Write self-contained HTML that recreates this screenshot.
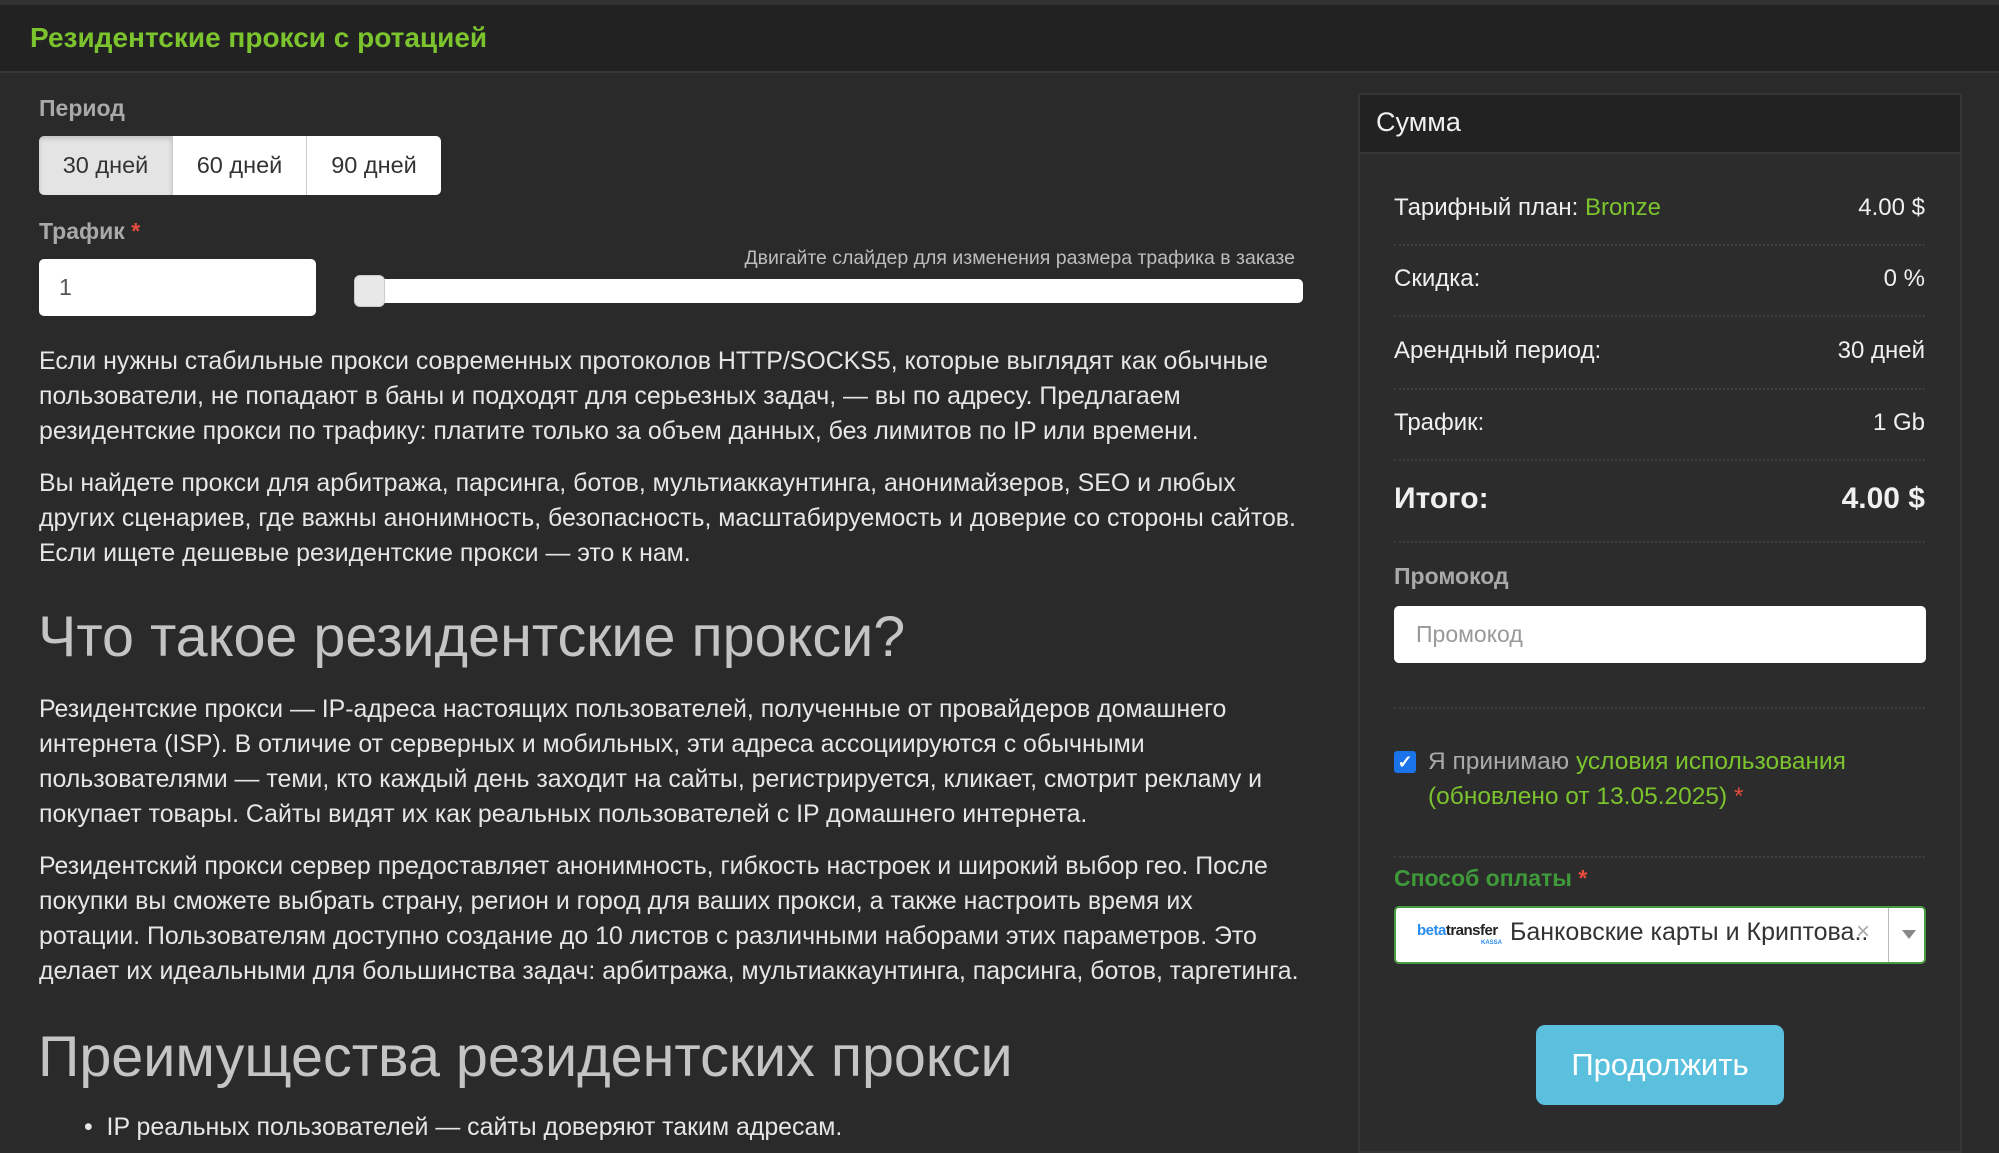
<!DOCTYPE html>
<html><head><meta charset="utf-8"><style>
*{box-sizing:border-box;margin:0;padding:0}
body{width:1999px;height:1144px;overflow:hidden;background:#2a2a2a;font-family:"Liberation Sans",sans-serif;color:#e2e2e2;position:relative}
.abs{position:absolute;white-space:nowrap}
.top{position:absolute;left:0;top:0;width:1999px;height:73px;background:#222;border-top:5px solid #333;border-bottom:2px solid #363636}
.title{left:30px;top:22px;font-size:28px;font-weight:bold;color:#7cc42e}
.lbl{font-size:23px;font-weight:bold;color:#a9a9a9}
.btns{left:39px;top:136px;height:59px;display:flex;border-radius:5px;overflow:hidden}
.btns div{width:134px;height:59px;background:#fff;color:#333;font-size:23.5px;line-height:59px;text-align:center;border-right:1px solid #ccc}
.btns div:first-child{background:#e4e4e4;box-shadow:inset 0 3px 5px rgba(0,0,0,.15)}
.btns div:last-child{border-right:none}
.inp{left:39px;top:259px;width:277px;height:57px;background:#fff;border-radius:5px;color:#555;font-size:23px;line-height:57px;padding-left:20px}
.track{left:354px;top:279px;width:949px;height:24px;background:#fff;border-radius:5px}
.thumb{left:354px;top:275px;width:31px;height:32px;background:#e8e8e8;border:1px solid #ccc;border-radius:6px}
.txt{left:39px;font-size:24.9px;line-height:35px;color:#e6e6e6}
.h2{left:38px;font-size:57.5px;color:#c4c4c4}
.panel{position:absolute;left:1358px;top:93px;width:604px;height:1060px;background:#2c2c2c;border:2px solid #353535}
.phead{position:absolute;left:1358px;top:93px;width:604px;height:61px;background:#222;border:2px solid #353535}
.row{position:absolute;left:1394px;width:531px;font-size:24px;color:#f0f0f0}
.row span.r{position:absolute;right:0}
.sep{position:absolute;left:1394px;width:531px;border-top:2px dotted #3e3e3e}
</style></head><body>
<div class="top"></div>
<div class="abs title">Резидентские прокси с ротацией</div>
<div class="abs lbl" style="left:39px;top:95px">Период</div>
<div class="abs btns"><div>30 дней</div><div>60 дней</div><div>90 дней</div></div>
<div class="abs lbl" style="left:39px;top:218px">Трафик <span style="color:#e74c3c">*</span></div>
<div class="abs inp">1</div>
<div class="abs" style="right:704px;top:247px;font-size:19.5px;color:#bdbdbd">Двигайте слайдер для изменения размера трафика в заказе</div>
<div class="abs track"></div>
<div class="abs thumb"></div>
<div class="abs txt" style="top:344px">Если нужны стабильные прокси современных протоколов HTTP/SOCKS5, которые выглядят как обычные<br>пользователи, не попадают в баны и подходят для серьезных задач, — вы по адресу. Предлагаем<br>резидентские прокси по трафику: платите только за объем данных, без лимитов по IP или времени.</div>
<div class="abs txt" style="top:466px">Вы найдете прокси для арбитража, парсинга, ботов, мультиаккаунтинга, анонимайзеров, SEO и любых<br>других сценариев, где важны анонимность, безопасность, масштабируемость и доверие со стороны сайтов.<br>Если ищете дешевые резидентские прокси — это к нам.</div>
<div class="abs h2" style="top:604px">Что такое резидентские прокси?</div>
<div class="abs txt" style="top:692px">Резидентские прокси — IP-адреса настоящих пользователей, полученные от провайдеров домашнего<br>интернета (ISP). В отличие от серверных и мобильных, эти адреса ассоциируются с обычными<br>пользователями — теми, кто каждый день заходит на сайты, регистрируется, кликает, смотрит рекламу и<br>покупает товары. Сайты видят их как реальных пользователей с IP домашнего интернета.</div>
<div class="abs txt" style="top:849px">Резидентский прокси сервер предоставляет анонимность, гибкость настроек и широкий выбор гео. После<br>покупки вы сможете выбрать страну, регион и город для ваших прокси, а также настроить время их<br>ротации. Пользователям доступно создание до 10 листов с различными наборами этих параметров. Это<br>делает их идеальными для большинства задач: арбитража, мультиаккаунтинга, парсинга, ботов, таргетинга.</div>
<div class="abs h2" style="top:1024px">Преимущества резидентских прокси</div>
<div class="abs txt" style="top:1110px;left:84px">•&nbsp; IP реальных пользователей — сайты доверяют таким адресам.</div>

<div class="panel"></div>
<div class="phead"></div>
<div class="abs" style="left:1376px;top:107px;font-size:27px;color:#f0f0f0">Сумма</div>
<div class="row" style="top:194px">Тарифный план: <span style="color:#7cc42e">Bronze</span><span class="r">4.00 $</span></div>
<div class="sep" style="top:244px"></div>
<div class="row" style="top:265px">Скидка:<span class="r">0 %</span></div>
<div class="sep" style="top:315px"></div>
<div class="row" style="top:337px">Арендный период:<span class="r">30 дней</span></div>
<div class="sep" style="top:388px"></div>
<div class="row" style="top:409px">Трафик:<span class="r">1 Gb</span></div>
<div class="sep" style="top:459px"></div>
<div class="row" style="top:482px;font-size:30px;font-weight:bold">Итого:<span class="r">4.00 $</span></div>
<div class="sep" style="top:541px"></div>
<div class="abs lbl" style="left:1394px;top:563px">Промокод</div>
<div class="abs" style="left:1394px;top:606px;width:532px;height:57px;background:#fff;border-radius:5px;font-size:23px;line-height:57px;padding-left:22px;color:#999">Промокод</div>
<div class="sep" style="top:707px"></div>
<div class="abs" style="left:1394px;top:751px;width:22px;height:22px;background:#1a73e8;border-radius:3px;color:#fff;font-size:18px;line-height:22px;text-align:center;font-weight:bold">✓</div>
<div class="abs" style="left:1428px;top:744px;font-size:24.5px;line-height:35px;color:#aaa">Я принимаю <span style="color:#7cc42e">условия использования</span><br><span style="color:#7cc42e">(обновлено от 13.05.2025)</span> <span style="color:#e74c3c">*</span></div>
<div class="sep" style="top:856px"></div>
<div class="abs lbl" style="left:1394px;top:865px;color:#3f9a3a">Способ оплаты <span style="color:#e74c3c">*</span></div>
<div class="abs" style="left:1394px;top:906px;width:532px;height:58px;background:#fff;border:2px solid #4a9a3f;border-radius:5px"></div>
<div class="abs" style="left:1888px;top:908px;width:1px;height:54px;background:#bbb"></div>
<div class="abs" style="left:1902px;top:930px;width:0;height:0;border-left:7px solid transparent;border-right:7px solid transparent;border-top:9px solid #888"></div>
<div class="abs" style="left:1417px;top:922px;font-size:15px;font-weight:bold;letter-spacing:-0.5px"><span style="color:#2a8cf0">beta</span><span style="color:#222">transfer</span></div>
<div class="abs" style="left:1481px;top:940px;font-size:6px;color:#2a8cf0;font-weight:bold">KASSA</div>
<div class="abs" style="left:1510px;top:918px;font-size:25px;color:#333">Банковские карты и Криптова..</div>
<div class="abs" style="left:1856px;top:918px;font-size:24px;color:#aaa">×</div>
<div class="abs" style="left:1536px;top:1025px;width:248px;height:80px;background:#5bc0de;border-radius:9px;color:#fff;font-size:31px;line-height:80px;text-align:center">Продолжить</div>
</body></html>
